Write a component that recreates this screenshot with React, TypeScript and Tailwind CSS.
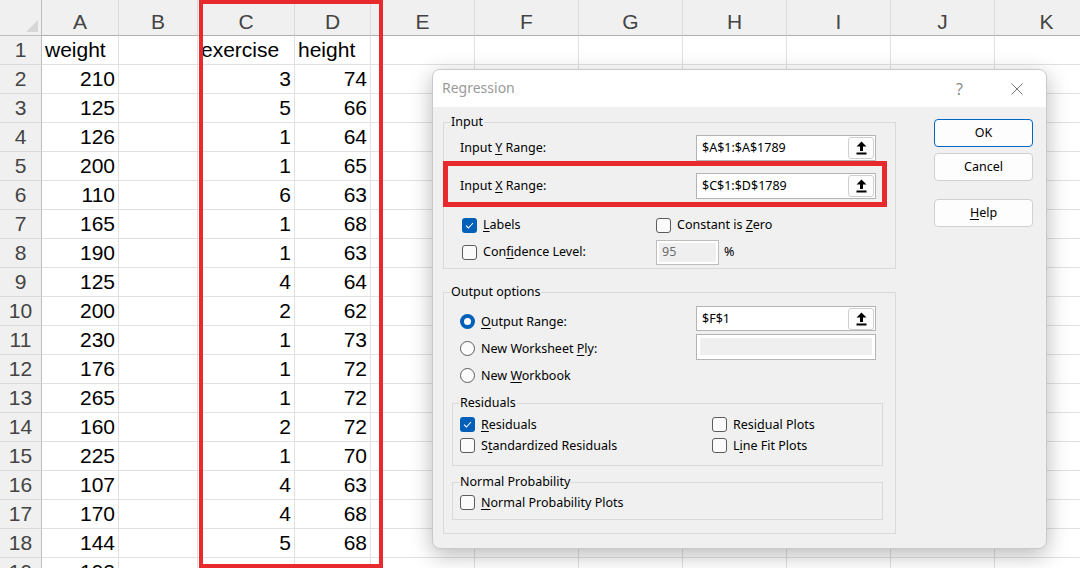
import React from "react";

const COLS = ["A", "B", "C", "D", "E", "F", "G", "H", "I", "J", "K"];
const DATA: (string | number)[][] = [
  ["weight", "", "exercise", "height"],
  [210, "", 3, 74],
  [125, "", 5, 66],
  [126, "", 1, 64],
  [200, "", 1, 65],
  [110, "", 6, 63],
  [165, "", 1, 68],
  [190, "", 1, 63],
  [125, "", 4, 64],
  [200, "", 2, 62],
  [230, "", 1, 73],
  [176, "", 1, 72],
  [265, "", 1, 72],
  [160, "", 2, 72],
  [225, "", 1, 70],
  [107, "", 4, 63],
  [170, "", 4, 68],
  [144, "", 5, 68],
  [192, "", 4, 66],
];

function Sheet() {
  return (
    <div className="grid grid-cols-[42px_77px_79px_97px_76px_104px_104px_104px_104px_104px_104px_104px] font-['Liberation_Sans',Arial,sans-serif] text-[21px]">
      <div className="relative h-[36px] bg-[#f0f0f0] border-r border-b border-[#bdbdbd]">
        <div className="absolute right-[3px] bottom-[3px] w-0 h-0 border-l-[12px] border-l-transparent border-b-[12px] border-b-[#d6d6d6]" />
      </div>
      {COLS.map((c) => (
        <div
          key={c}
          className="h-[36px] bg-[#f0f0f0] border-r border-[#dadada] border-b border-b-[#b0b0b0] flex items-center justify-center pt-[9px] text-[#444444]"
        >
          {c}
        </div>
      ))}
      {DATA.map((row, ri) => (
        <React.Fragment key={ri}>
          <div className="h-[29px] bg-[#f0f0f0] border-r border-r-[#bdbdbd] border-b border-b-[#dadada] flex items-center justify-center text-[#444444]">
            {ri + 1}
          </div>
          {COLS.map((c, ci) => {
            const v = ci < 4 ? row[ci] : "";
            const num = typeof v === "number";
            return (
              <div
                key={c}
                className={`h-[29px] border-r border-b border-[#e1e1e1] flex items-center text-black ${
                  num ? "justify-end pr-[3px]" : "justify-start pl-[3px]"
                }`}
              >
                {v}
              </div>
            );
          })}
        </React.Fragment>
      ))}
    </div>
  );
}

function Check({ checked = false }: { checked?: boolean }) {
  if (checked)
    return (
      <div className="w-[15px] h-[15px] shrink-0 rounded-[3px] bg-[#005fb8] flex items-center justify-center">
        <svg width="9" height="7" viewBox="0 0 9 7">
          <path d="M1 3.6 L3.4 6 L8 1" fill="none" stroke="white" strokeWidth="1.1" />
        </svg>
      </div>
    );
  return <div className="w-[15px] h-[15px] shrink-0 rounded-[3px] border border-[#5c5c5c] bg-[#fbfbfb]" />;
}

function Radio({ checked = false }: { checked?: boolean }) {
  if (checked)
    return (
      <div className="w-[15px] h-[15px] shrink-0 rounded-full bg-[#005fb8] flex items-center justify-center">
        <div className="w-[7px] h-[7px] rounded-full bg-white" />
      </div>
    );
  return <div className="w-[15px] h-[15px] shrink-0 rounded-full border border-[#5c5c5c] bg-[#fbfbfb]" />;
}

function UpIcon() {
  return (
    <svg width="11" height="14" viewBox="0 0 11 14">
      <path d="M5.5 0.5 L10.5 5.5 H7 V10 H4 V5.5 H0.5 Z" fill="black" />
      <rect x="0.5" y="11.5" width="10" height="2" fill="black" />
    </svg>
  );
}

function RangeBox({ value, h = 26 }: { value: string; h?: number }) {
  return (
    <div
      className={`w-[180px] ${h === 26 ? "h-[26px]" : "h-[25px]"} bg-white border border-[#b4b4b4] flex items-center justify-between pl-[5px] pr-[1px]`}
    >
      <span className="text-black">{value}</span>
      <div className="w-[26px] h-[22px] rounded-[3px] border border-[#cfcfcf] bg-[#fdfdfd] flex items-center justify-center">
        <UpIcon />
      </div>
    </div>
  );
}

function Btn({ children, primary = false }: { children: React.ReactNode; primary?: boolean }) {
  return (
    <div
      className={`w-[99px] h-[28px] rounded-[4px] bg-[#fdfdfd] border flex items-center justify-center text-black ${
        primary ? "border-[#0067c0]" : "border-[#d0d0d0]"
      }`}
    >
      {children}
    </div>
  );
}

function Dialog() {
  return (
    <div className="absolute left-[432px] top-[69px] w-[615px] h-[480px] rounded-[8px] overflow-hidden border border-[#c9c9c9] bg-[#f0f0f0] shadow-[0_6px_22px_rgba(0,0,0,0.28)] font-['Noto_Sans',sans-serif] text-[12.5px] leading-[18px] text-black">
      <div className="h-[37px] bg-white flex items-center pl-[9px] pr-[23px]">
        <span className="text-[14px] text-[#9a9a9a] flex-1 pb-[2px]">Regression</span>
        <span className="text-[16px] text-[#8c8c8c] mr-[48px]">?</span>
        <svg width="12" height="12" viewBox="0 0 12 12">
          <path d="M0.5 0.5 L11.5 11.5 M11.5 0.5 L0.5 11.5" stroke="#777" strokeWidth="1" />
        </svg>
      </div>
      <div className="flex pl-[10px] pt-[6px]">
        <div className="w-[453px]">
          {/* Input */}
          <fieldset className="border border-[#d9d9d9] pb-[3px]">
            <legend className="ml-[6px] px-[1px]">Input</legend>
            <div className="mt-[4px] h-[26px] flex items-center">
              <div className="w-[252px] pl-[16px]">
                <span>
                  Input <u className="underline-offset-2">Y</u> Range:
                </span>
              </div>
              <RangeBox value="$A$1:$A$1789" />
            </div>
            <div className="-ml-[1px] w-[444px] h-[46px] border-[5px] border-[#e82a2e] pt-[7px] flex items-start">
              <div className="w-[248px] pl-[12px] h-[26px] flex items-center">
                <span>
                  Input <u className="underline-offset-2">X</u> Range:
                </span>
              </div>
              <RangeBox value="$C$1:$D$1789" />
            </div>
            <div className="mt-[5px] h-[26px] flex items-center">
              <div className="w-[212px] pl-[18px] flex items-center gap-[6px]">
                <Check checked />
                <span>
                  <u className="underline-offset-2">L</u>abels
                </span>
              </div>
              <div className="flex items-center gap-[6px]">
                <Check />
                <span>
                  Constant is <u className="underline-offset-2">Z</u>ero
                </span>
              </div>
            </div>
            <div className="mt-[1px] h-[26px] flex items-center">
              <div className="w-[212px] pl-[18px] flex items-center gap-[6px]">
                <Check />
                <span>
                  Con<u className="underline-offset-2">f</u>idence Level:
                </span>
              </div>
              <div className="w-[63px] h-[25px] bg-white border border-[#bcbcbc] p-[2px]">
                <div className="w-full h-full bg-[#efefef] pl-[3px] text-[#6d6d6d] flex items-center">95</div>
              </div>
              <span className="ml-[5px]">%</span>
            </div>
          </fieldset>

          {/* Output options */}
          <fieldset className="mt-[14px] border border-[#d9d9d9] pb-[13px]">
            <legend className="ml-[6px] px-[1px]">Output options</legend>
            <div className="flex">
              <div className="w-[252px] pt-[7px]">
                <div className="h-[27px] pl-[16px] flex items-center gap-[6px]">
                  <Radio checked />
                  <span>
                    <u className="underline-offset-2">O</u>utput Range:
                  </span>
                </div>
                <div className="h-[27px] pl-[16px] flex items-center gap-[6px]">
                  <Radio />
                  <span>
                    New Worksheet <u className="underline-offset-2">P</u>ly:
                  </span>
                </div>
                <div className="h-[27px] pl-[16px] flex items-center gap-[6px]">
                  <Radio />
                  <span>
                    New <u className="underline-offset-2">W</u>orkbook
                  </span>
                </div>
              </div>
              <div className="pt-[5px]">
                <RangeBox value="$F$1" h={25} />
                <div className="mt-[3px] w-[180px] h-[26px] bg-white border border-[#b4b4b4] p-[3px]">
                  <div className="w-full h-[17px] bg-[#efefef]" />
                </div>
              </div>
            </div>

            <fieldset className="mt-[5px] ml-[8px] w-[431px] border border-[#d9d9d9] pb-[9px]">
              <legend className="ml-[6px] px-[1px]">Residuals</legend>
              <div className="mt-[2px] h-[21px] flex items-center">
                <div className="w-[259px] pl-[7px] flex items-center gap-[6px]">
                  <Check checked />
                  <span>
                    <u className="underline-offset-2">R</u>esiduals
                  </span>
                </div>
                <div className="flex items-center gap-[6px]">
                  <Check />
                  <span>
                    Resi<u className="underline-offset-2">d</u>ual Plots
                  </span>
                </div>
              </div>
              <div className="h-[21px] flex items-center">
                <div className="w-[259px] pl-[7px] flex items-center gap-[6px]">
                  <Check />
                  <span>
                    S<u className="underline-offset-2">t</u>andardized Residuals
                  </span>
                </div>
                <div className="flex items-center gap-[6px]">
                  <Check />
                  <span>
                    L<u className="underline-offset-2">i</u>ne Fit Plots
                  </span>
                </div>
              </div>
            </fieldset>

            <fieldset className="mt-[7px] ml-[8px] w-[431px] border border-[#d9d9d9] pb-[6px]">
              <legend className="ml-[6px] px-[1px]">Normal Probability</legend>
              <div className="mt-[1px] h-[21px] flex items-center pl-[7px] gap-[6px]">
                <Check />
                <span>
                  <u className="underline-offset-2">N</u>ormal Probability Plots
                </span>
              </div>
            </fieldset>
          </fieldset>
        </div>

        <div className="ml-[38px] mt-[6px] flex flex-col">
          <Btn primary>OK</Btn>
          <div className="mt-[6px]">
            <Btn>Cancel</Btn>
          </div>
          <div className="mt-[18px]">
            <Btn>
              <span>
                <u className="underline-offset-2">H</u>elp
              </span>
            </Btn>
          </div>
        </div>
      </div>
    </div>
  );
}

export default function App() {
  return (
    <div className="relative w-[1080px] h-[568px] overflow-hidden bg-white">
      <Sheet />
      <div className="absolute left-[199px] top-0 w-[184px] h-[568px] border-4 border-[#e82a2e]" />
      <Dialog />
    </div>
  );
}
